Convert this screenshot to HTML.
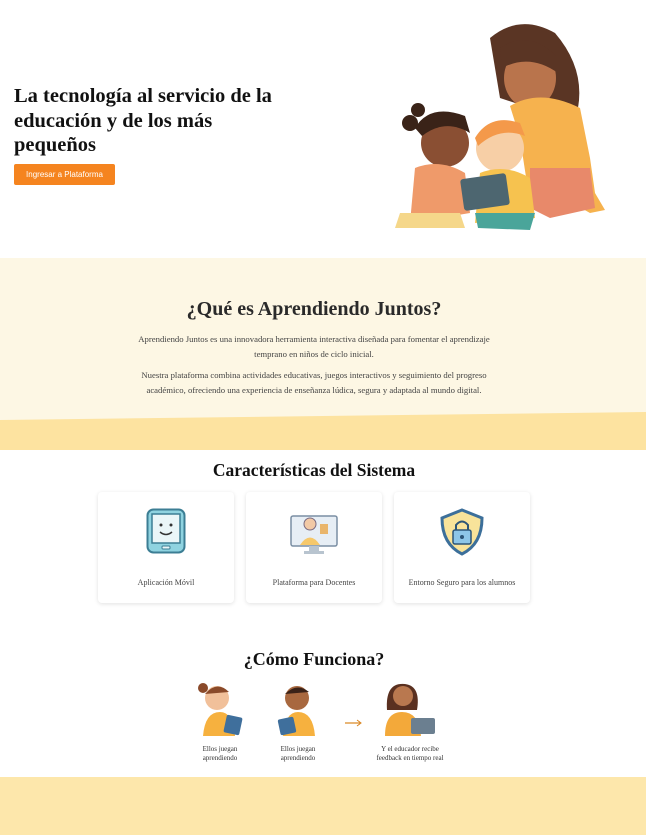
<!DOCTYPE html>
<html><head><meta charset="utf-8"><style>
*{margin:0;padding:0;box-sizing:border-box}
body{width:646px;height:835px;overflow:hidden;background:#fff;font-family:"Liberation Serif",serif;color:#222;position:relative}
.abs{position:absolute}
h1{position:absolute;left:14px;top:84px;font-size:20.5px;line-height:24.5px;font-weight:bold;color:#111;width:270px}
.btn{position:absolute;left:14px;top:164px;width:101px;height:21px;background:#f5841f;border-radius:2px;color:#fff;font:8px "Liberation Sans",sans-serif;text-align:center;line-height:21px}
.sec2{position:absolute;left:0;top:258px;width:646px;height:192px;background:#fdf7e4}
.card{position:absolute;top:492px;width:136px;height:111px;background:#fff;border-radius:4px;box-shadow:0 1px 4px rgba(0,0,0,.12)}
.card p{position:absolute;top:86px;width:100%;text-align:center;font-size:8px;color:#444}
.cap{position:absolute;font-size:7px;line-height:9px;text-align:center;color:#333}
.ctr{position:absolute;left:0;width:628px;text-align:center}
.para{position:absolute;left:128px;width:372px;text-align:center;font-size:8.7px;line-height:15px;color:#444}
</style></head><body>
<h1>La tecnología al servicio de la educación y de los más pequeños</h1>
<div class="btn">Ingresar a Plataforma</div>
<svg class="abs" style="left:390px;top:18px" width="222" height="215" viewBox="0 0 222 215">
<path d="M100 20 Q130 -5 165 15 Q195 50 188 90 L170 100 L110 80 Z" fill="#5a3524"/>
<ellipse cx="140" cy="60" rx="26" ry="30" fill="#b9744c"/>
<path d="M110 30 Q140 10 168 40 L168 55 Q140 35 112 50Z" fill="#5a3524"/>
<path d="M120 88 Q150 70 190 90 L200 140 L205 175 L215 192 L200 195 L170 178 L140 185 L130 120Z" fill="#f6b24e"/>
<path d="M140 150 L200 150 L205 190 L160 200 L140 190Z" fill="#e8896a"/>
<circle cx="55" cy="125" r="24" fill="#8a4f33"/>
<path d="M25 110 Q40 85 75 98 L80 115 Q55 100 32 118Z" fill="#3a2318"/>
<circle cx="20" cy="105" r="8" fill="#3a2318"/><circle cx="28" cy="92" r="7" fill="#3a2318"/>
<path d="M25 150 Q50 140 75 155 L80 195 L20 205 Z" fill="#ef9a6a"/>
<path d="M10 195 L70 195 L75 210 L5 210Z" fill="#f5d78a"/>
<circle cx="110" cy="130" r="24" fill="#f7cfa6"/>
<path d="M85 120 Q100 95 130 105 L135 118 Q110 108 88 128Z" fill="#f4994a"/>
<path d="M90 155 Q115 145 140 160 L145 200 L85 205Z" fill="#f6c24f"/>
<path d="M85 195 L145 195 L140 212 L88 210Z" fill="#4aa59a"/>
<rect x="72" y="158" width="46" height="32" rx="3" fill="#4d6670" transform="rotate(-8 95 174)"/>
</svg>
<div class="sec2"></div>
<svg class="abs" style="left:0;top:410px" width="646" height="40"><polygon points="0,10 646,2 646,40 0,40" fill="#fde3a0"/></svg>
<div class="ctr" style="top:298px;font-size:20px;font-weight:bold;color:#2a2a2a">¿Qué es Aprendiendo Juntos?</div>
<div class="para" style="top:332px">Aprendiendo Juntos es una innovadora herramienta interactiva diseñada para fomentar el aprendizaje temprano en niños de ciclo inicial.</div>
<div class="para" style="top:368px">Nuestra plataforma combina actividades educativas, juegos interactivos y seguimiento del progreso académico, ofreciendo una experiencia de enseñanza lúdica, segura y adaptada al mundo digital.</div>
<div class="ctr" style="top:460px;font-size:17.5px;font-weight:bold;color:#111">Características del Sistema</div>
<div class="card" style="left:98px"><svg class="abs" style="left:48px;top:16px" width="40" height="46"><rect x="1.5" y="1.5" width="37" height="43" rx="6" fill="#8fd3e0" stroke="#3c7e94" stroke-width="2"/><rect x="6" y="6" width="28" height="29" fill="#eaf6f8" stroke="#3c7e94" stroke-width="1.5"/><circle cx="15" cy="17" r="1.5" fill="#333"/><circle cx="25" cy="17" r="1.5" fill="#333"/><path d="M14 24 Q20 29 26 24" stroke="#333" stroke-width="1.5" fill="none"/><rect x="16" y="38" width="8" height="3" rx="1" fill="#eaf6f8" stroke="#3c7e94"/></svg><p>Aplicación Móvil</p></div>
<div class="card" style="left:246px"><svg class="abs" style="left:44px;top:18px" width="48" height="46"><rect x="1" y="6" width="46" height="30" rx="2" fill="#e7eef5" stroke="#7a8ea3" stroke-width="1.5"/><circle cx="20" cy="14" r="6" fill="#f2c9a6" stroke="#7a6a80"/><path d="M10 35 Q20 20 30 35Z" fill="#f6c86a"/><rect x="30" y="14" width="8" height="10" fill="#e9b56b"/><rect x="19" y="36" width="10" height="5" fill="#b8c4cf"/><rect x="14" y="41" width="20" height="3" fill="#b8c4cf"/></svg><p>Plataforma para Docentes</p></div>
<div class="card" style="left:394px"><svg class="abs" style="left:46px;top:16px" width="44" height="48"><path d="M22 2 L42 10 Q42 36 22 46 Q2 36 2 10Z" fill="#f8e39a" stroke="#3c6f9a" stroke-width="3"/><rect x="13" y="22" width="18" height="14" rx="2" fill="#8dc6e8" stroke="#2c5577" stroke-width="1.5"/><path d="M16 22 V17 Q22 10 28 17 V22" fill="none" stroke="#2c5577" stroke-width="2"/><circle cx="22" cy="29" r="2" fill="#2c5577"/></svg><p>Entorno Seguro para los alumnos</p></div>
<div class="ctr" style="top:649px;font-size:18px;font-weight:bold;color:#111">¿Cómo Funciona?</div>
<svg class="abs" style="left:195px;top:680px" width="260" height="62">
<circle cx="22" cy="18" r="12" fill="#f1c09a"/><path d="M10 14 Q22 0 34 12 Z" fill="#8a4a2a"/><circle cx="8" cy="8" r="5" fill="#8a4a2a"/>
<path d="M8 56 Q10 32 25 32 Q38 32 40 56Z" fill="#f6b13f"/><rect x="30" y="36" width="16" height="18" rx="2" fill="#3f6f9c" transform="rotate(12 38 45)"/>
<circle cx="102" cy="18" r="12" fill="#a8683f"/><path d="M90 14 Q102 2 114 12 Z" fill="#3a2218"/>
<path d="M88 56 Q90 32 103 32 Q118 32 120 56Z" fill="#f6b13f"/><rect x="84" y="38" width="16" height="16" rx="2" fill="#3f6f9c" transform="rotate(-12 92 46)"/>
<path d="M150 43 H165" stroke="#d9841e" stroke-width="1.2"/><path d="M162 40 L166 43 L162 46" stroke="#d9841e" fill="none"/>
<path d="M192 30 Q190 2 210 4 Q226 6 222 30Z" fill="#5a3020"/><circle cx="208" cy="16" r="10" fill="#b9784f"/>
<path d="M190 56 Q190 32 207 32 Q224 32 226 56Z" fill="#f3a93a"/><rect x="216" y="38" width="24" height="16" rx="2" fill="#6b7f90"/>
</svg>
<div class="cap" style="left:190px;top:745px;width:60px">Ellos juegan aprendiendo</div>
<div class="cap" style="left:268px;top:745px;width:60px">Ellos juegan aprendiendo</div>
<div class="cap" style="left:370px;top:745px;width:80px">Y el educador recibe feedback en tiempo real</div>
<div class="abs" style="left:0;top:777px;width:646px;height:58px;background:#fde7ab"></div>
</body></html>
